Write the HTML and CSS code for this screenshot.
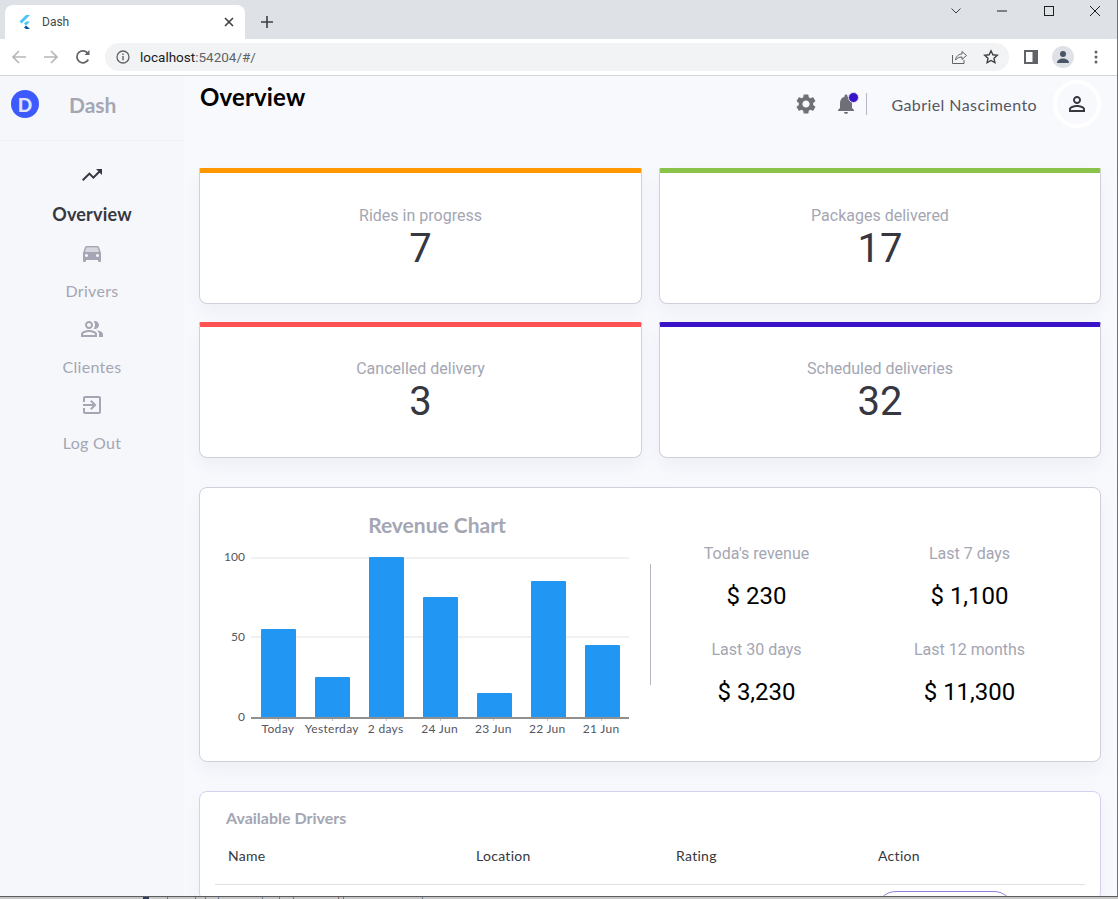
FILE: index.html
```html
<!DOCTYPE html>
<html lang="en">
<head>
    <meta charset="UTF-8">
    <meta name="viewport" content="width=device-width, initial-scale=1.0">
    <title>Dash</title>
    <link rel="stylesheet" href="styles.css">
</head>
<body>
    <div class="chrome">
        <div class="tabstrip">
            <div class="tab">
                <svg class="favicon" viewBox="0 0 12 14" width="12" height="14">
                    <path d="M7 0h4L2.500 8.500.5 6.500z" fill="#47c5fb"/>
                    <path d="M7 6.500h4L7 10.500 5 8.500z" fill="#47c5fb"/>
                    <path d="M5 12.500l2-2 4 3.500H7z" fill="#00569e"/>
                </svg>
                <span class="tab-title">Dash</span>
                <svg class="tab-close" viewBox="0 0 10 10" width="10" height="10"><path d="M1 1l8 8M9 1l-8 8" stroke="#3c4043" stroke-width="1.600"/></svg>
            </div>
            <svg class="new-tab" viewBox="0 0 12 12" width="12" height="12"><path d="M6 0v12M0 6h12" stroke="#3c4043" stroke-width="1.600"/></svg>
            <div class="window-btns">
                <svg viewBox="0 0 10 6" width="10" height="6"><path d="M.5.5 5 5 9.500.5" fill="none" stroke="#3c4043"/></svg>
                <svg viewBox="0 0 10 10" width="10" height="10"><path d="M0 5h10" stroke="#1f1f1f"/></svg>
                <svg viewBox="0 0 10 10" width="10" height="10"><rect x=".5" y=".5" width="9" height="9" fill="none" stroke="#1f1f1f"/></svg>
                <svg viewBox="0 0 10 10" width="10" height="10"><path d="M0 0l10 10M10 0 0 10" stroke="#1f1f1f"/></svg>
            </div>
        </div>
        <div class="toolbar">
            <svg class="nav-icon" viewBox="0 0 16 16" width="16" height="16"><path d="M15 8H2M8 2 2 8l6 6" fill="none" stroke="#b5b7ba" stroke-width="1.700"/></svg>
            <svg class="nav-icon" viewBox="0 0 16 16" width="16" height="16"><path d="M1 8h13M8 2l6 6-6 6" fill="none" stroke="#b5b7ba" stroke-width="1.700"/></svg>
            <svg class="nav-icon" viewBox="0 0 16 16" width="16" height="16"><path d="M13.300 10.500A6 6 0 1 1 13 4.600" fill="none" stroke="#5f6368" stroke-width="1.700"/><path d="M14.500 1v5h-5z" fill="#5f6368"/></svg>
            <div class="omnibox">
                <svg viewBox="0 0 14 14" width="14" height="14"><circle cx="7" cy="7" r="6" fill="none" stroke="#5f6368" stroke-width="1.300"/><path d="M7 6v4.200M7 3.600v1.300" stroke="#5f6368" stroke-width="1.400"/></svg>
                <span class="url">localhost<span class="url-dim">:54204/#/</span></span>
                <div class="omni-right">
                    <svg viewBox="0 0 16 16" width="16" height="16"><path d="M1.500 6v8.500H13V11" fill="none" stroke="#5f6368"/><path d="M4.500 11c.5-4 3.500-6 6.500-6V2.500L15.500 6.500 11 10.500V8c-3 0-5 1-6.500 3z" fill="none" stroke="#5f6368"/></svg>
                    <svg viewBox="0 0 16 16" width="16" height="16"><path d="M8 1.800l1.900 4 4.400.5-3.300 3 .9 4.400L8 11.500l-3.900 2.200.9-4.400-3.300-3 4.400-.5z" fill="none" stroke="#3c4043" stroke-width="1.400"/></svg>
                </div>
            </div>
            <svg class="panel-icon" viewBox="0 0 14 14" width="14" height="14"><rect x="1" y="1" width="12" height="12" fill="none" stroke="#5f6368" stroke-width="2"/><rect x="8.500" y="1" width="4.500" height="12" fill="#5f6368"/></svg>
            <div class="profile-btn">
                <svg viewBox="0 0 14 14" width="14" height="14"><circle cx="7" cy="4" r="3" fill="#4a5568"/><path d="M1 13c0-3 3-4.500 6-4.500s6 1.500 6 4.500z" fill="#4a5568"/></svg>
            </div>
            <svg class="dots" viewBox="0 0 4 14" width="4" height="14"><circle cx="2" cy="2" r="1.500" fill="#5f6368"/><circle cx="2" cy="7" r="1.500" fill="#5f6368"/><circle cx="2" cy="12" r="1.500" fill="#5f6368"/></svg>
        </div>
    </div>

    <div class="app">
        <aside class="sidebar">
            <div class="brand">
                <span class="logo"><span class="logo-d">D</span></span>
                <span class="brand-name">Dash</span>
            </div>
            <nav class="menu">
                <a class="menu-item active">
                    <svg viewBox="0 0 24 24" width="24" height="24"><path d="M16 6l2.290 2.290-4.880 4.880-4-4L2 16.590 3.410 18l6-6 4 4 6.300-6.290L22 12V6z" fill="#363740"/></svg>
                    <span>Overview</span>
                </a>
                <a class="menu-item">
                    <svg viewBox="0 0 24 24" width="24" height="24"><path d="M5 11l1.500-4.500h11L19 11z" fill="#a4a6b3" opacity=".4"/><path d="M18.920 6.010C18.720 5.420 18.160 5 17.500 5h-11c-.66 0-1.210.42-1.420 1.010L3 12v8c0 .55.45 1 1 1h1c.55 0 1-.45 1-1v-1h12v1c0 .55.45 1 1 1h1c.55 0 1-.45 1-1v-8l-2.080-5.990zM6.500 16C5.670 16 5 15.330 5 14.500S5.670 13 6.500 13 8 13.670 8 14.500 7.330 16 6.500 16zm11 0c-.83 0-1.500-.67-1.500-1.500s.67-1.500 1.500-1.500 1.500.67 1.500 1.500-.67 1.500-1.500 1.500zM5 11l1.500-4.500h11L19 11H5z" fill="#a4a6b3"/></svg>
                    <span>Drivers</span>
                </a>
                <a class="menu-item">
                    <svg viewBox="0 0 24 24" width="24" height="24"><path d="M16.670 13.130C18.040 14.060 19 15.320 19 17v3h4v-3c0-2.180-3.570-3.470-6.330-3.870zM15 12c2.210 0 4-1.790 4-4s-1.790-4-4-4c-.47 0-.91.100-1.330.24C14.500 5.270 15 6.580 15 8s-.5 2.730-1.330 3.760c.42.140.86.240 1.330.240zM9 12c2.210 0 4-1.790 4-4s-1.790-4-4-4-4 1.790-4 4 1.790 4 4 4zm0-6c1.100 0 2 .9 2 2s-.9 2-2 2-2-.9-2-2 .9-2 2-2zm0 7c-2.670 0-8 1.340-8 4v3h16v-3c0-2.660-5.330-4-8-4zm6 5H3v-.99C3.200 16.290 6.300 15 9 15s5.800 1.290 6 2v1z" fill="#a4a6b3"/></svg>
                    <span>Clientes</span>
                </a>
                <a class="menu-item">
                    <svg viewBox="0 0 24 24" width="24" height="24"><path d="M10.090 15.590 11.500 17l5-5-5-5-1.410 1.410L12.670 11H3v2h9.670l-2.580 2.590zM19 3H5c-1.110 0-2 .9-2 2v4h2V5h14v14H5v-4H3v4c0 1.100.89 2 2 2h14c1.100 0 2-.9 2-2V5c0-1.100-.9-2-2-2z" fill="#a4a6b3"/></svg>
                    <span>Log Out</span>
                </a>
            </nav>
        </aside>

        <main class="content">
            <header class="topbar">
                <h1 class="page-title">Overview</h1>
                <div class="top-right">
                    <svg class="gear" viewBox="0 0 24 24" width="24" height="24"><path d="M19.140 12.940c.04-.3.060-.61.060-.94 0-.32-.02-.64-.07-.94l2.030-1.580a.49.49 0 0 0 .12-.61l-1.920-3.320a.488.488 0 0 0-.59-.22l-2.390.96c-.5-.38-1.030-.7-1.620-.94l-.36-2.540a.484.484 0 0 0-.48-.41h-3.840c-.24 0-.43.170-.47.410l-.36 2.540c-.59.240-1.130.570-1.620.94l-2.390-.96c-.22-.08-.47 0-.59.220L2.740 8.870c-.12.210-.08.470.12.610l2.030 1.580c-.05.3-.09.630-.09.940s.02.640.07.940l-2.030 1.580a.49.49 0 0 0-.12.610l1.920 3.320c.12.220.37.290.59.220l2.390-.96c.5.380 1.030.7 1.620.94l.36 2.540c.05.240.24.410.48.410h3.840c.24 0 .44-.17.47-.41l.36-2.540c.59-.24 1.130-.56 1.620-.94l2.390.96c.22.080.47 0 .59-.22l1.920-3.320c.12-.22.070-.47-.12-.61l-2.010-1.580zM12 15.600c-1.980 0-3.600-1.620-3.600-3.600s1.620-3.600 3.600-3.600 3.600 1.620 3.600 3.600-1.620 3.600-3.600 3.600z" fill="#6f7077"/></svg>
                    <div class="bell">
                        <svg viewBox="0 0 24 24" width="24" height="24"><path d="M12 22c1.100 0 2-.9 2-2h-4c0 1.100.9 2 2 2zm6-6v-5c0-3.070-1.630-5.640-4.500-6.320V4c0-.83-.67-1.500-1.500-1.500s-1.500.67-1.500 1.500v.68C7.640 5.360 6 7.920 6 11v5l-2 2v1h16v-1l-2-2z" fill="#6f7077"/></svg>
                        <span class="bell-dot"></span>
                    </div>
                    <span class="top-divider"></span>
                    <span class="user-name">Gabriel Nascimento</span>
                    <div class="avatar">
                        <svg viewBox="0 0 24 24" width="24" height="24"><path d="M12 5.900a2.100 2.100 0 1 1 0 4.200 2.100 2.100 0 0 1 0-4.200m0 9c2.970 0 6.100 1.460 6.100 2.100v1.100H5.900V17c0-.64 3.130-2.100 6.100-2.100M12 4C9.790 4 8 5.790 8 8s1.790 4 4 4 4-1.790 4-4-1.790-4-4-4zm0 9c-2.670 0-8 1.340-8 4v3h16v-3c0-2.660-5.330-4-8-4z" fill="#363740"/></svg>
                    </div>
                </div>
            </header>

            <section class="stat-grid">
                <div class="stat-card orange"><span class="stat-label">Rides in progress</span><span class="stat-value">7</span></div>
                <div class="stat-card green"><span class="stat-label">Packages delivered</span><span class="stat-value">17</span></div>
                <div class="stat-card red"><span class="stat-label">Cancelled delivery</span><span class="stat-value">3</span></div>
                <div class="stat-card indigo"><span class="stat-label">Scheduled deliveries</span><span class="stat-value">32</span></div>
            </section>

            <section class="panel revenue">
                <div class="chart">
                    <h2 class="chart-title">Revenue Chart</h2>
                    <div class="plot">
                        <div class="y-axis"><span>100</span><span>50</span><span>0</span></div>
                        <div class="plot-main">
                            <div class="bars">
                                <div class="bar" style="height: 55%"></div>
                                <div class="bar" style="height: 25%"></div>
                                <div class="bar" style="height: 100%"></div>
                                <div class="bar" style="height: 75%"></div>
                                <div class="bar" style="height: 15%"></div>
                                <div class="bar" style="height: 85%"></div>
                                <div class="bar" style="height: 45%"></div>
                            </div>
                            <div class="x-axis">
                                <span>Today</span><span>Yesterday</span><span>2 days</span><span>24 Jun</span><span>23 Jun</span><span>22 Jun</span><span>21 Jun</span>
                            </div>
                        </div>
                    </div>
                </div>
                <div class="revenue-divider"></div>
                <div class="revenue-stats">
                    <div class="rev"><span class="rev-label">Toda's revenue</span><span class="rev-value">$ 230</span></div>
                    <div class="rev"><span class="rev-label">Last 7 days</span><span class="rev-value">$ 1,100</span></div>
                    <div class="rev"><span class="rev-label">Last 30 days</span><span class="rev-value">$ 3,230</span></div>
                    <div class="rev"><span class="rev-label">Last 12 months</span><span class="rev-value">$ 11,300</span></div>
                </div>
            </section>

            <section class="panel drivers">
                <h2 class="drivers-title">Available Drivers</h2>
                <div class="table-head">
                    <span>Name</span><span>Location</span><span>Rating</span><span>Action</span>
                </div>
                <div class="table-row"><span></span><span></span><span></span><span class="assign-btn"></span></div>
            </section>
        </main>
    </div>

    <div class="window-edge"></div>
    <div class="taskbar-edge"></div>
</body>
</html>
```

FILE: styles.css
```css
* {
    box-sizing: border-box;
}
html, body {
    height: 100%;
}
body {
    margin: 0;
    overflow: hidden;
    background-color: #f8f9fd;
    font-family: "Lato", "Liberation Sans", sans-serif;
    position: relative;
}

/* browser chrome */
.chrome {
    height: 76px;
    background-color: #fff;
    border-bottom: 1px solid #d4d5d8;
}
.tabstrip {
    height: 39px;
    background-color: #dee1e6;
    display: flex;
    align-items: flex-end;
    padding-left: 5px;
    position: relative;
}
.tab {
    width: 240px;
    height: 34px;
    background-color: #fff;
    border-radius: 8px 8px 0 0;
    display: flex;
    align-items: center;
    padding: 0 11px 0 14px;
}
.favicon {
    margin-right: 11px;
}
.tab-title {
    flex: 1;
    font-family: "Roboto", sans-serif;
    font-size: 12px;
    color: #45474a;
}
.new-tab {
    margin: 0 0 11px 16px;
}
.window-btns {
    position: absolute;
    top: 6px;
    right: 0;
    width: 178px;
    display: flex;
    align-items: center;
    justify-content: space-between;
    padding: 0 18px 0 11px;
}
.toolbar {
    height: 36px;
    display: flex;
    align-items: center;
    padding-left: 11px;
}
.nav-icon {
    margin-right: 16px;
}
.omnibox {
    width: 904px;
    height: 28px;
    margin-left: -2px;
    border-radius: 14px;
    background-color: #f1f3f4;
    display: flex;
    align-items: center;
    padding: 0 11px;
}
.url {
    margin-left: 10px;
    font-family: "Roboto", sans-serif;
    font-size: 13.500px;
    color: #202124;
}
.url-dim {
    color: #5f6368;
}
.omni-right {
    margin-left: auto;
    display: flex;
    gap: 16px;
    margin-right: -1px;
}
.panel-icon {
    margin-left: 15px;
}
.profile-btn {
    width: 22px;
    height: 22px;
    margin-left: 14px;
    border-radius: 50%;
    background-color: #dee1e6;
    display: flex;
    align-items: center;
    justify-content: center;
}
.dots {
    margin-left: 20px;
}

/* app layout */
.app {
    display: flex;
    height: 823px;
    overflow: hidden;
}
.sidebar {
    width: 184px;
    flex: none;
    background-color: #f6f7fb;
}
.brand {
    height: 65px;
    border-bottom: 1px solid #f1f2f6;
    display: flex;
    align-items: flex-start;
    padding: 14px 0 0 11px;
}
.logo {
    width: 28px;
    height: 28px;
    border-radius: 50%;
    background-color: #3d5afe;
    display: flex;
    align-items: center;
    justify-content: center;
}
.logo-d {
    font-size: 19px;
    font-weight: 900;
    color: #dfe4fb;
}
.brand-name {
    margin: 2px 0 0 30px;
    font-size: 21px;
    font-weight: 700;
    line-height: 26px;
    color: #a4a6b3;
}
.menu {
    display: flex;
    flex-direction: column;
    padding-top: 22px;
}
.menu-item {
    height: 76px;
    display: flex;
    flex-direction: column;
    align-items: center;
    gap: 16px;
    font-size: 16px;
    letter-spacing: .3px;
    color: #a4a6b3;
}
.menu-item span {
    line-height: 20px;
}
.menu-item.active {
    height: 78px;
    gap: 17px;
    color: #363740;
    font-size: 18px;
    font-weight: 700;
    letter-spacing: .2px;
}

/* main column */
.content {
    flex: 1;
    min-width: 0;
    padding: 0 17px 0 15px;
}
.topbar {
    height: 92px;
    display: flex;
    justify-content: space-between;
    align-items: flex-start;
}
.page-title {
    margin: 3px 0 0 1px;
    font-size: 24px;
    font-weight: 700;
    letter-spacing: .15px;
    line-height: 36px;
    color: #000;
}
.top-right {
    display: flex;
    align-items: center;
    height: 48px;
    margin: 4px 0 0 0;
}
.gear {
    margin-right: 16px;
}
.bell {
    position: relative;
    width: 24px;
    height: 24px;
}
.bell-dot {
    position: absolute;
    top: 0;
    right: -1px;
    width: 11px;
    height: 11px;
    border-radius: 50%;
    background-color: #3a13c9;
    border: 1px solid #e6e2fa;
}
.top-divider {
    width: 1px;
    height: 22px;
    margin: 0 24px 0 8px;
    background-color: #b4b6c4;
}
.user-name {
    font-size: 16px;
    letter-spacing: .42px;
    color: #55565f;
}
.avatar {
    width: 48px;
    height: 48px;
    margin-left: 16px;
    border-radius: 50%;
    border: 4px solid #fff;
    display: flex;
    align-items: center;
    justify-content: center;
}

/* stat cards */
.stat-grid {
    display: grid;
    grid-template-columns: 443px 442px;
    grid-auto-rows: 136px;
    column-gap: 17px;
    row-gap: 18px;
}
.stat-card {
    background-color: #fff;
    border: 1px solid #cfd0d9;
    border-top: 5px solid;
    border-radius: 2px 2px 8px 8px;
    box-shadow: 0 8px 16px rgba(180, 185, 210, .15);
    display: flex;
    flex-direction: column;
    align-items: center;
    padding-top: 33px;
}
.stat-card:nth-child(n+3) {
    padding-top: 32px;
}
.stat-card.orange { border-top-color: #ff9800; }
.stat-card.green { border-top-color: #8bc34a; }
.stat-card.red { border-top-color: #ff5252; }
.stat-card.indigo { border-top-color: #3a13c9; }
.stat-label {
    font-family: "Roboto", sans-serif;
    font-size: 16px;
    line-height: 19px;
    color: #a4a6b3;
}
.stat-value {
    font-family: "Roboto", sans-serif;
    font-size: 40px;
    line-height: 47px;
    color: #363740;
}

/* panels */
.panel {
    width: 902px;
    background-color: #fff;
    border: 1px solid #cfd0d9;
    border-radius: 8px;
    box-shadow: 0 8px 16px rgba(180, 185, 210, .15);
}
.revenue {
    height: 275px;
    margin-top: 29px;
    display: flex;
    padding: 0 15px 0 25px;
}
.chart {
    width: 404px;
    flex: none;
}
.chart-title {
    margin: 23px 0 0;
    text-align: center;
    padding-left: 20px;
    font-size: 21px;
    font-weight: 700;
    line-height: 27px;
    color: #a4a6b3;
}
.plot {
    display: flex;
    margin-top: 19px;
}
.y-axis {
    width: 20px;
    height: 160px;
    position: relative;
    font-size: 12px;
    color: #55565f;
}
.y-axis span {
    position: absolute;
    right: 0;
    line-height: 14px;
    transform: translateY(-7px);
}
.y-axis span:nth-child(1) { top: 0; }
.y-axis span:nth-child(2) { top: 50%; }
.y-axis span:nth-child(3) { top: 100%; }
.plot-main {
    width: 384px;
}
.bars {
    height: 162px;
    margin-left: 6px;
    padding: 0 9px 0 10px;
    display: flex;
    justify-content: space-between;
    align-items: flex-end;
    border-bottom: 2px solid #909090;
    background:
        linear-gradient(#f1f1f4, #f1f1f4) 0 0 / 100% 2px no-repeat,
        linear-gradient(#f1f1f4, #f1f1f4) 0 79px / 100% 2px no-repeat;
}
.bar {
    width: 35px;
    background-color: #2196f3;
    border-radius: 1px 1px 0 0;
}
.x-axis {
    display: flex;
    justify-content: space-between;
    margin: 1px 0 0 6px;
    padding: 0 1px 0 0;
    font-size: 12px;
    letter-spacing: .3px;
    line-height: 18px;
    color: #55565f;
}
.x-axis span {
    width: 54px;
    text-align: center;
    white-space: nowrap;
    position: relative;
}
.x-axis span::before {
    content: "";
    position: absolute;
    top: -1px;
    left: 50%;
    width: 1px;
    height: 2px;
    background-color: #c4c4c4;
}
.revenue-divider {
    width: 1px;
    height: 121px;
    margin: 76px 0 0 21px;
    background-color: #b4b6c4;
}
.revenue-stats {
    display: grid;
    grid-template-columns: 213px 213px;
    grid-auto-rows: 96px;
    padding-top: 56px;
    margin-left: -1px;
}
.rev {
    display: flex;
    flex-direction: column;
    align-items: center;
}
.rev-label {
    font-family: "Roboto", sans-serif;
    font-size: 16px;
    line-height: 19px;
    color: #a4a6b3;
}
.rev-value {
    margin-top: 19px;
    font-family: "Roboto", sans-serif;
    font-size: 24px;
    font-weight: 450;
    line-height: 28px;
    color: #000;
}

/* drivers table */
.drivers {
    margin-top: 29px;
    padding: 16px 15px 0 15px;
    height: 110px;
    overflow: hidden;
    border-color: #d6d0f0;
}
.drivers-title {
    margin: 0 0 0 11px;
    font-size: 16px;
    font-weight: 700;
    line-height: 20px;
    color: #a4a6b3;
}
.table-head {
    display: grid;
    grid-template-columns: 248px 200px 202px 1fr;
    padding: 18px 0 18px 13px;
    font-size: 14px;
    line-height: 20px;
    color: #363740;
    border-bottom: 1px solid #e0e0e0;
    letter-spacing: .3px;
}
.table-row {
    display: grid;
    grid-template-columns: 248px 200px 201px 1fr;
    padding: 6px 0 0 13px;
}
.assign-btn {
    width: 138px;
    height: 40px;
    border: 1px solid #8f7fe0;
    border-radius: 20px;
    margin-left: -1px;
}

/* desktop showing past the browser window */
.window-edge {
    position: absolute;
    top: 0;
    right: 0;
    bottom: 0;
    width: 1px;
    background-color: #6f7275;
}
.taskbar-edge {
    position: absolute;
    left: 0;
    right: 0;
    bottom: 0;
    height: 3px;
    border-top: 1px solid #5b5d60;
    background:
        linear-gradient(#2c3e5c, #2c3e5c) 143px 0 / 6px 100% no-repeat,
        linear-gradient(#6a7a8c, #6a7a8c) 167px 0 / 1px 100% no-repeat,
        linear-gradient(#6a7a8c, #6a7a8c) 195px 0 / 1px 100% no-repeat,
        linear-gradient(#6a7a8c, #6a7a8c) 205px 0 / 1px 100% no-repeat,
        linear-gradient(#6a7a8c, #6a7a8c) 218px 0 / 1px 100% no-repeat,
        linear-gradient(#6a7a8c, #6a7a8c) 262px 0 / 1px 100% no-repeat,
        linear-gradient(#6a7a8c, #6a7a8c) 279px 0 / 1px 100% no-repeat,
        linear-gradient(#6a7a8c, #6a7a8c) 293px 0 / 1px 100% no-repeat,
        linear-gradient(#8c6a6a, #8c6a6a) 338px 0 / 1px 100% no-repeat,
        linear-gradient(#6a7a8c, #6a7a8c) 343px 0 / 1px 100% no-repeat,
        linear-gradient(#6a7a8c, #6a7a8c) 422px 0 / 1px 100% no-repeat,
        #c6c6c6;
}
```
